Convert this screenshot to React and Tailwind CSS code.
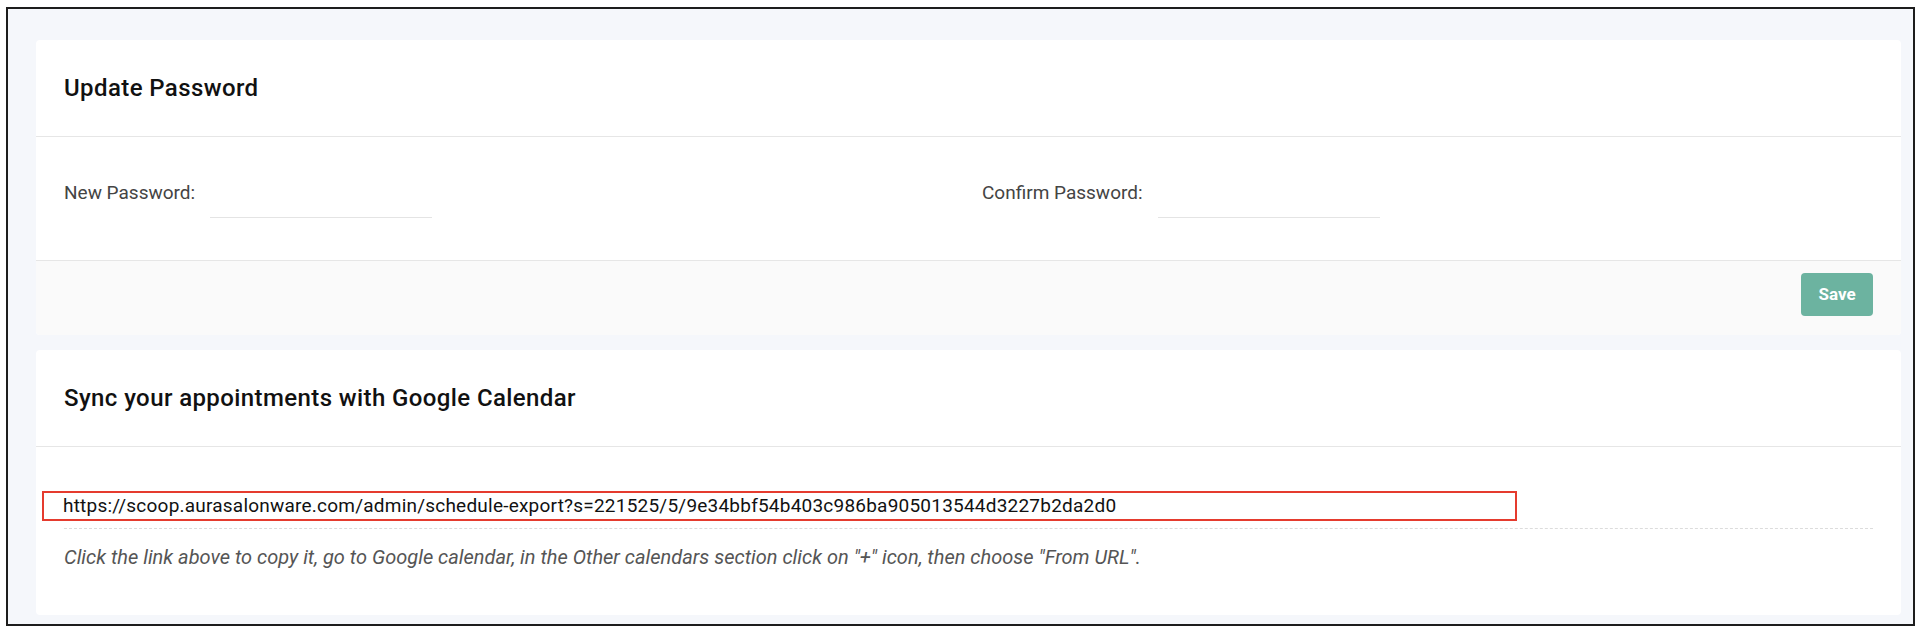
// AccountSettings.jsx
import { useState } from 'react';

const exportUrl =
  'https://scoop.aurasalonware.com/admin/schedule-export?s=221525/5/9e34bbf54b403c986ba905013544d3227b2da2d0';

const PasswordField = ({ label, value, onChange }) => (
  <div className="flex items-start">
    <label className="text-[19px] leading-6 text-[#444]">{label}</label>
    <input
      type="password"
      value={value}
      onChange={(e) => onChange(e.target.value)}
      className="ml-[15px] w-[222px] h-[37px] border-b border-[#e4e4e4] bg-transparent outline-none"
    />
  </div>
);

const App = () => {
  const [password, setPassword] = useState('');
  const [confirm, setConfirm] = useState('');

  const handleSave = () => {
    if (password && password === confirm) {
      console.log('Password updated');
    }
  };

  return (
    <div className="min-h-screen bg-white pt-[7px] pl-[6px] font-['Roboto','Liberation_Sans',sans-serif]">
      <div className="w-[1909px] h-[619px] border-2 border-[#1d1d1d] bg-[#f5f7fb] pl-[28px] pr-[12px] pt-[31px] overflow-hidden">
        {/* Update password card */}
        <div className="bg-white rounded-[4px]">
          <div className="h-[97px] flex items-center px-7 border-b border-[#e6e6e6]">
            <h2 className="text-[24px] font-medium tracking-[0.4px] text-[#111]">Update Password</h2>
          </div>
          <div className="grid grid-cols-[918px_1fr] px-7 pt-[44px] pb-[42px] border-b border-[#e6e6e6]">
            <PasswordField label="New Password:" value={password} onChange={setPassword} />
            <PasswordField label="Confirm Password:" value={confirm} onChange={setConfirm} />
          </div>
          <div className="h-[74px] bg-[#fafafa] flex justify-end items-start pt-[12px] pr-7 rounded-b-[4px]">
            <button
              onClick={handleSave}
              className="w-[72px] h-[43px] rounded-[4px] bg-[#6cb3a0] text-white text-[17px] font-bold"
            >
              Save
            </button>
          </div>
        </div>

        {/* Google calendar sync card */}
        <div className="mt-[15px] bg-white rounded-[4px] h-[265px]">
          <div className="h-[97px] flex items-center px-7 border-b border-[#e6e6e6]">
            <h2 className="text-[24px] font-medium tracking-[0.4px] text-[#111]">Sync your appointments with Google Calendar</h2>
          </div>
          <div className="px-7 pt-[44px]">
            <div className="-ml-[22px] w-[1475px] h-[30px] border-2 border-[#e53b2e] pl-[19px] flex items-center text-[19px] tracking-[0.22px] text-[#111] cursor-pointer">
              {exportUrl}
            </div>
            <div className="mt-[7px] border-t border-dashed border-[#dcdcdc]"></div>
            <p className="mt-[16px] text-[20px] leading-6 italic text-[#555]">
              Click the link above to copy it, go to Google calendar, in the Other calendars section click on "+" icon, then choose "From URL".
            </p>
          </div>
        </div>
      </div>
    </div>
  );
};

export default App;
